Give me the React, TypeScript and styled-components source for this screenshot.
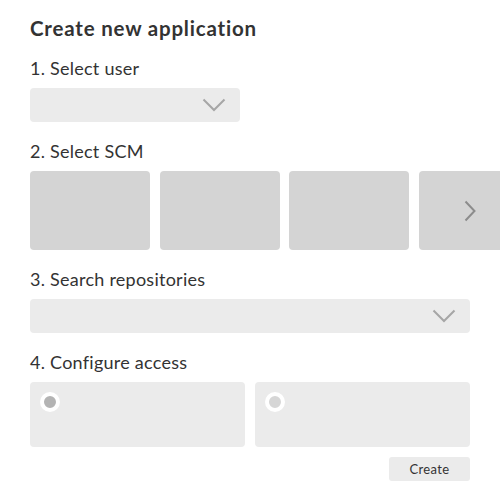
import React from "react";
import styled, { createGlobalStyle } from "styled-components";

const GlobalStyle = createGlobalStyle`
    body {
        margin: 0;
        background: #ffffff;
        font-family: Lato, "Open Sans", sans-serif;
        color: #333333;
    }
`;

const App = () => {
    return (
        <>
            <GlobalStyle />
            <Page>
                <Title>Create new application</Title>
                <Section>
                    <Label>1. Select user</Label>
                    <Dropdown width="210px">
                        <ChevronDown />
                    </Dropdown>
                </Section>
                <Section>
                    <Label>2. Select SCM</Label>
                    <TileRow>
                        <Tile />
                        <Tile />
                        <Tile />
                        <Tile>
                            <ChevronRight />
                        </Tile>
                    </TileRow>
                </Section>
                <Section>
                    <Label>3. Search repositories</Label>
                    <Dropdown width="440px">
                        <ChevronDown />
                    </Dropdown>
                </Section>
                <Section>
                    <Label>4. Configure access</Label>
                    <CardRow>
                        <AccessCard>
                            <Radio selected />
                        </AccessCard>
                        <AccessCard>
                            <Radio />
                        </AccessCard>
                    </CardRow>
                    <Footer>
                        <CreateButton>Create</CreateButton>
                    </Footer>
                </Section>
            </Page>
        </>
    );
};

const ChevronDown = () => (
    <svg width="24" height="14" viewBox="0 0 24 14">
        <polyline
            points="1.5,1.5 12,12 22.5,1.5"
            fill="none"
            stroke="#a6a6a6"
            strokeWidth="2"
        />
    </svg>
);

const ChevronRight = () => (
    <svg width="12" height="22" viewBox="0 0 12 22">
        <polyline
            points="1.5,1.5 10.5,11 1.5,20.5"
            fill="none"
            stroke="#8c8c8c"
            strokeWidth="2"
        />
    </svg>
);

export default App;

const Page = styled.div`
    width: 440px;
    padding: 14px 30px 0 30px;
`;

const Title = styled.h1`
    margin: 0 0 14px 0;
    font-size: 20.5px;
    line-height: 28px;
    font-weight: 700;
    letter-spacing: 0.8px;
`;

const Section = styled.div`
    margin-bottom: 17px;
`;

const Label = styled.div`
    font-size: 18px;
    line-height: 24px;
    letter-spacing: 0.25px;
    margin-bottom: 8px;
`;

const Dropdown = styled.div<{ width: string }>`
    box-sizing: border-box;
    width: ${(props) => props.width};
    height: 34px;
    background: #ebebeb;
    border-radius: 4px;
    display: flex;
    align-items: center;
    justify-content: flex-end;
    padding-right: 14px;
`;

const TileRow = styled.div`
    display: flex;
    gap: 9.7px;
    width: 470px;
    overflow: hidden;
`;

const Tile = styled.div`
    box-sizing: border-box;
    flex: 0 0 120px;
    height: 79px;
    background: #d4d4d4;
    border-radius: 4px;
    display: flex;
    align-items: center;
    justify-content: flex-start;
    padding-left: 45px;
`;

const CardRow = styled.div`
    display: flex;
    gap: 10px;
`;

const AccessCard = styled.div`
    flex: 1;
    height: 65px;
    background: #ebebeb;
    border-radius: 4px;
    padding: 10px 0 0 10px;
    box-sizing: border-box;
`;

const Radio = styled.div<{ selected?: boolean }>`
    width: 12px;
    height: 12px;
    border-radius: 50%;
    border: 4px solid #ffffff;
    background: ${(props) => (props.selected ? "#b3b3b3" : "#d6d6d6")};
`;

const Footer = styled.div`
    display: flex;
    justify-content: flex-end;
    margin-top: 10px;
`;

const CreateButton = styled.button`
    width: 81px;
    height: 24px;
    border: none;
    border-radius: 3px;
    background: #ebebeb;
    font-family: Lato, "Open Sans", sans-serif;
    font-size: 13px;
    letter-spacing: 0.4px;
    color: #333333;
    padding: 0;
`;
